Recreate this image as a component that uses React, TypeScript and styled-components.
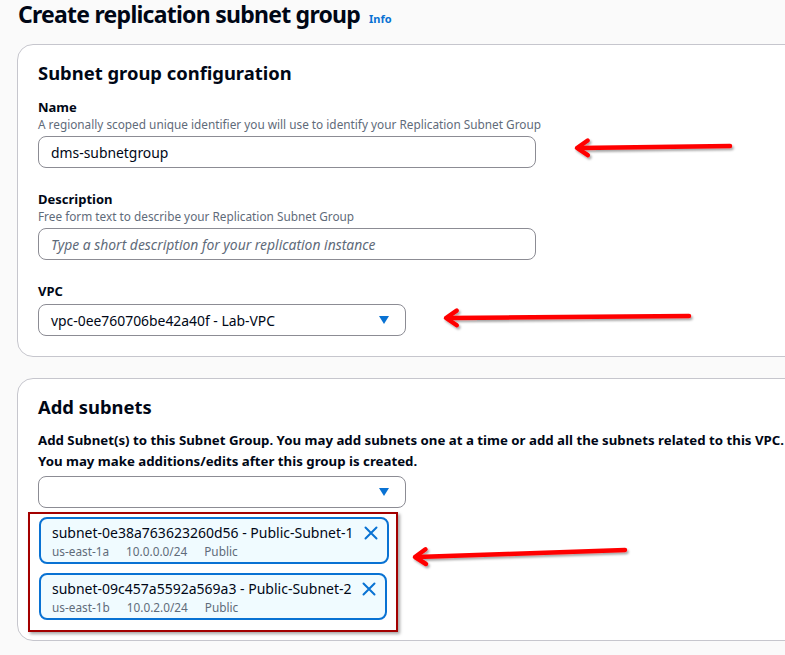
import React from "react";
import styled, { createGlobalStyle } from "styled-components";

const GlobalStyle = createGlobalStyle`
  html, body {
    margin: 0;
    padding: 0;
    background: #fafafa;
  }
  body {
    font-family: "Noto Sans", "Open Sans", Arial, sans-serif;
    color: #000716;
  }
`;

const Page = styled.div`
  position: relative;
  width: 785px;
  height: 655px;
  overflow: hidden;
  background: #fafafa;
  padding: 0 0 0 17px;
  box-sizing: border-box;
`;

const Header = styled.div`
  display: flex;
  align-items: baseline;
  gap: 9px;
  height: 44px;
  margin-left: 1px;
`;

const Title = styled.h1`
  margin: 0;
  font-size: 23px;
  line-height: 28px;
  font-weight: 700;
  letter-spacing: -0.75px;
  color: #000716;
`;

const InfoLink = styled.a`
  font-size: 11px;
  font-weight: 700;
  color: #0972d3;
  text-decoration: none;
`;

const Panel = styled.section`
  width: 820px;
  box-sizing: border-box;
  background: #fff;
  border: 1px solid #c6c6cd;
  border-radius: 16px;
  padding: 16px 20px 20px 20px;
  margin-bottom: 21px;
`;

const PanelTitle = styled.h2`
  margin: 0;
  font-size: 18.4px;
  line-height: 24px;
  font-weight: 700;
  color: #000716;
`;

const Fields = styled.div`
  display: flex;
  flex-direction: column;
  gap: 22px;
  margin-top: 13px;
`;

const Field = styled.div`
  display: flex;
  flex-direction: column;
`;

const Label = styled.label`
  font-size: 13px;
  line-height: 18px;
  font-weight: 700;
  color: #000716;
`;

const Hint = styled.div`
  font-size: 11.8px;
  line-height: 16px;
  color: #5f6b7a;
`;

const Input = styled.div<{ $placeholder?: boolean; $width: number }>`
  margin-top: 4px;
  width: ${(p) => p.$width}px;
  height: 32px;
  box-sizing: border-box;
  border: 1px solid #8c8c94;
  border-radius: 8px;
  background: #fff;
  display: flex;
  align-items: center;
  justify-content: space-between;
  padding: 0 16px 0 12px;
  font-size: 13.9px;
  color: ${(p) => (p.$placeholder ? "#5f6b7a" : "#000716")};
  font-style: ${(p) => (p.$placeholder ? "italic" : "normal")};
`;

const Caret = styled.span`
  width: 0;
  height: 0;
  border-left: 5px solid transparent;
  border-right: 5px solid transparent;
  border-top: 8px solid #0972d3;
`;

const Lead = styled.p`
  margin: 11px 0 0 0;
  font-size: 13.25px;
  line-height: 21px;
  font-weight: 700;
  color: #000716;
  white-space: nowrap;
`;

const TokenList = styled.div`
  position: relative;
  display: flex;
  flex-direction: column;
  align-items: flex-start;
  gap: 9px;
  margin-top: 9px;
  padding-left: 1px;
`;

const Token = styled.div`
  display: inline-flex;
  align-items: flex-start;
  gap: 10px;
  box-sizing: border-box;
  border: 2px solid #0972d3;
  border-radius: 8px;
  background: #f0fbff;
  padding: 4px 9px 3px 11px;
`;

const TokenBody = styled.div`
  display: flex;
  flex-direction: column;
`;

const TokenName = styled.span`
  font-size: 14px;
  line-height: 20px;
  color: #000716;
`;

const TokenMeta = styled.div`
  display: flex;
  gap: 17px;
  font-size: 11.8px;
  line-height: 16px;
  color: #5f6b7a;
`;

const Dismiss = styled.span`
  display: flex;
  margin-top: 3px;
`;

const Highlight = styled.div`
  position: absolute;
  left: -10px;
  top: -5px;
  width: 370px;
  height: 120px;
  box-sizing: border-box;
  border: 2px solid #a30000;
  box-shadow: 2px 2px 3px rgba(0, 0, 0, 0.35);
  pointer-events: none;
`;

const Overlay = styled.svg`
  position: absolute;
  left: 0;
  top: 0;
  pointer-events: none;
`;

const subnets = [
  {
    name: "subnet-0e38a763623260d56 - Public-Subnet-1",
    az: "us-east-1a",
    cidr: "10.0.0.0/24",
    type: "Public",
  },
  {
    name: "subnet-09c457a5592a569a3 - Public-Subnet-2",
    az: "us-east-1b",
    cidr: "10.0.2.0/24",
    type: "Public",
  },
];

// annotation arrows: tip (x1,y1) -> tail (x2,y2)
const arrows = [
  [577, 148, 730, 146],
  [446, 318, 689, 316],
  [415, 557, 625, 550],
];

const Arrow = ({ a }: { a: number[] }) => {
  const [x1, y1, x2, y2] = a;
  const ang = Math.atan2(y2 - y1, x2 - x1);
  const len = 13;
  const spread = 0.6;
  const hx1 = x1 + len * Math.cos(ang + spread);
  const hy1 = y1 + len * Math.sin(ang + spread);
  const hx2 = x1 + len * Math.cos(ang - spread);
  const hy2 = y1 + len * Math.sin(ang - spread);
  return (
    <g
      stroke="#ff0000"
      strokeWidth={4.5}
      strokeLinecap="round"
      strokeLinejoin="round"
      fill="none"
      filter="url(#arrowShadow)"
    >
      <path d={`M${x2} ${y2} L${x1 + 2} ${y1}`} />
      <path d={`M${hx1} ${hy1} L${x1} ${y1} L${hx2} ${hy2}`} />
    </g>
  );
};

const CloseIcon = () => (
  <svg width="14" height="14" viewBox="0 0 14 14">
    <path
      d="M1.5 1.5 L12.5 12.5 M12.5 1.5 L1.5 12.5"
      stroke="#0972d3"
      strokeWidth="2"
      strokeLinecap="round"
    />
  </svg>
);

const App = () => {
  return (
    <>
      <GlobalStyle />
      <Page>
        <Header>
          <Title>Create replication subnet group</Title>
          <InfoLink href="#">Info</InfoLink>
        </Header>

        <Panel>
          <PanelTitle>Subnet group configuration</PanelTitle>
          <Fields>
            <Field>
              <Label>Name</Label>
              <Hint>
                A regionally scoped unique identifier you will use to identify
                your Replication Subnet Group
              </Hint>
              <Input $width={498}>dms-subnetgroup</Input>
            </Field>
            <Field>
              <Label>Description</Label>
              <Hint>Free form text to describe your Replication Subnet Group</Hint>
              <Input $width={498} $placeholder>
                Type a short description for your replication instance
              </Input>
            </Field>
            <Field>
              <Label>VPC</Label>
              <Input $width={368}>
                vpc-0ee760706be42a40f - Lab-VPC
                <Caret />
              </Input>
            </Field>
          </Fields>
        </Panel>

        <Panel>
          <PanelTitle>Add subnets</PanelTitle>
          <Lead>
            Add Subnet(s) to this Subnet Group. You may add subnets one at a
            time or add all the subnets related to this VPC.
            <br />
            You may make additions/edits after this group is created.
          </Lead>
          <Input $width={368}>
            <span />
            <Caret />
          </Input>
          <TokenList>
            {subnets.map((s) => (
              <Token key={s.name}>
                <TokenBody>
                  <TokenName>{s.name}</TokenName>
                  <TokenMeta>
                    <span>{s.az}</span>
                    <span>{s.cidr}</span>
                    <span>{s.type}</span>
                  </TokenMeta>
                </TokenBody>
                <Dismiss>
                  <CloseIcon />
                </Dismiss>
              </Token>
            ))}
            <Highlight />
          </TokenList>
        </Panel>

        <Overlay width="785" height="655">
          <defs>
            <filter id="arrowShadow" x="-10%" y="-50%" width="120%" height="200%">
              <feDropShadow dx="1.5" dy="2" stdDeviation="1.2" floodColor="#000" floodOpacity="0.35" />
            </filter>
          </defs>
          {arrows.map((a, i) => (
            <Arrow key={i} a={a} />
          ))}
        </Overlay>
      </Page>
    </>
  );
};

export default App;
